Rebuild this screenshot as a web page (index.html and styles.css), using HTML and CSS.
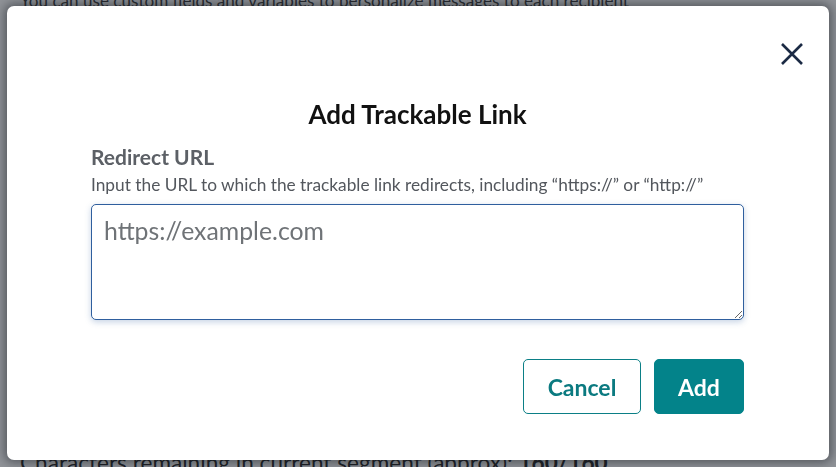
FILE: index.html
```html
<!DOCTYPE html>
<html lang="en">
<head>
<meta charset="utf-8">
<title>Add Trackable Link</title>
<link rel="stylesheet" href="styles.css">
</head>
<body>
<div class="page">
  <p class="page-intro">You can use custom fields and variables to personalize messages to each recipient</p>
  <div class="page-body"></div>
  <p class="page-count">Characters remaining in current segment (approx): <strong>160/160</strong></p>
</div>
<div class="overlay">
  <div class="modal" role="dialog" aria-labelledby="modal-title">
    <button class="close" type="button" aria-label="Close">
      <svg width="24" height="24" viewBox="0 0 24 24" aria-hidden="true">
        <path d="M2 2 L22 22 M22 2 L2 22" stroke="#1b2a44" stroke-width="2.6" stroke-linecap="butt" fill="none"/>
      </svg>
    </button>
    <h2 class="title" id="modal-title">Add Trackable Link</h2>
    <div class="field">
      <label class="label" for="url">Redirect URL</label>
      <p class="help">Input the URL to which the trackable link redirects, including “https://” or “http://”</p>
      <textarea id="url" class="input" placeholder="https://example.com" autofocus></textarea>
    </div>
    <div class="actions">
      <button class="btn btn-secondary" type="button">Cancel</button>
      <button class="btn btn-primary" type="button">Add</button>
    </div>
  </div>
</div>
</body>
</html>
```
FILE: styles.css
```css
* { box-sizing: border-box; }
html, body { margin: 0; padding: 0; }
body {
  width: 836px;
  height: 467px;
  overflow: hidden;
  background: #ffffff;
  font-family: Lato, "Liberation Sans", sans-serif;
  color: #222;
}
.page { padding: 0 20px; }
.page-intro {
  margin: -9px 0 0;
  font-size: 17.1px;
  line-height: 20px;
  color: #2a2a2a;
  white-space: nowrap;
}
.page-body { height: 440px; }
.page-count {
  margin: 0;
  font-size: 22.6px;
  line-height: 24px;
  color: #111;
  white-space: nowrap;
}
.overlay {
  position: fixed;
  inset: 0;
  background: rgba(40, 46, 56, 0.52);
}
.modal {
  position: absolute;
  left: 7px;
  top: 6px;
  width: 822px;
  height: 454px;
  background: #fff;
  border-radius: 7px;
  box-shadow: 0 0 10px 3px rgba(20, 24, 32, 0.45);
  padding: 92px 85px 46px 84px;
  display: flex;
  flex-direction: column;
}
.close {
  position: absolute;
  top: 36px;
  right: 25px;
  width: 24px;
  height: 24px;
  padding: 0;
  border: 0;
  background: none;
  cursor: pointer;
  display: flex;
}
.title {
  margin: 0;
  text-align: center;
  font-size: 26px;
  line-height: 32px;
  font-weight: 700;
  color: #111;
}
.field {
  margin-top: 14px;
  display: flex;
  flex-direction: column;
}
.label {
  font-size: 21px;
  line-height: 26px;
  font-weight: 700;
  color: #5c6066;
}
.help {
  margin: 4px 0 0;
  font-size: 17.3px;
  line-height: 22px;
  color: #53575d;
}
.input {
  margin-top: 8px;
  height: 116px;
  width: 100%;
  resize: vertical;
  border: 1px solid #2f5f9e;
  border-radius: 5px;
  box-shadow: 0 2px 6px rgba(47, 95, 158, 0.28);
  padding: 11px 12px;
  font-family: Lato, "Liberation Sans", sans-serif;
  font-size: 24.8px;
  line-height: 30px;
  color: #222;
  outline: none;
  caret-color: #2f5f9e;
}
.input::placeholder { color: #6f7377; opacity: 1; }
.actions {
  margin-top: 39px;
  display: flex;
  justify-content: flex-end;
  gap: 13px;
}
.btn {
  height: 55px;
  border-radius: 5px;
  font-family: Lato, "Liberation Sans", sans-serif;
  font-size: 23px;
  font-weight: 700;
  cursor: pointer;
}
.btn-secondary {
  width: 118px;
  background: #fff;
  border: 1px solid #0b7f86;
  color: #0b7a80;
}
.btn-primary {
  width: 90px;
  background: #03838a;
  border: 1px solid #03838a;
  color: #fff;
}
```
